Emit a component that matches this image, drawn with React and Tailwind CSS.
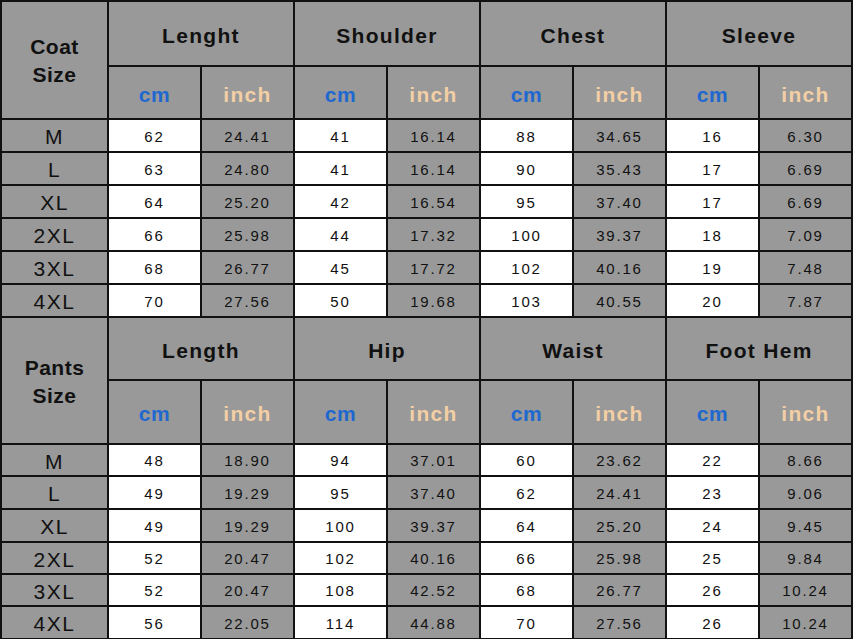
import React from 'react';

const coatRows = [
  ['M', '62', '24.41', '41', '16.14', '88', '34.65', '16', '6.30'],
  ['L', '63', '24.80', '41', '16.14', '90', '35.43', '17', '6.69'],
  ['XL', '64', '25.20', '42', '16.54', '95', '37.40', '17', '6.69'],
  ['2XL', '66', '25.98', '44', '17.32', '100', '39.37', '18', '7.09'],
  ['3XL', '68', '26.77', '45', '17.72', '102', '40.16', '19', '7.48'],
  ['4XL', '70', '27.56', '50', '19.68', '103', '40.55', '20', '7.87'],
];

const pantsRows = [
  ['M', '48', '18.90', '94', '37.01', '60', '23.62', '22', '8.66'],
  ['L', '49', '19.29', '95', '37.40', '62', '24.41', '23', '9.06'],
  ['XL', '49', '19.29', '100', '39.37', '64', '25.20', '24', '9.45'],
  ['2XL', '52', '20.47', '102', '40.16', '66', '25.98', '25', '9.84'],
  ['3XL', '52', '20.47', '108', '42.52', '68', '26.77', '26', '10.24'],
  ['4XL', '56', '22.05', '114', '44.88', '70', '27.56', '26', '10.24'],
];

const gray = 'bg-[#999999]';

function Section({ title, heads, rows }) {
  return (
    <>
      <div className={`${gray} row-span-2 flex items-center justify-center pt-[2px] text-center text-[21px] font-bold leading-[28px] tracking-[0.5px] text-[#111]`}>
        <div>
          {title}
          <br />
          Size
        </div>
      </div>
      {heads.map((h) => (
        <div key={h} className={`${gray} col-span-2 flex items-center justify-center pt-1 text-[21px] font-bold tracking-[1.3px] text-[#111]`}>
          {h}
        </div>
      ))}
      {heads.map((h) => (
        <React.Fragment key={h + '-u'}>
          <div className={`${gray} flex items-center justify-center pt-1 text-[21px] font-bold tracking-[0.5px] text-[#1f68cf]`}>cm</div>
          <div className={`${gray} flex items-center justify-center pt-1 text-[21px] font-bold tracking-[1.3px] text-[#f3cfa6]`}>inch</div>
        </React.Fragment>
      ))}
      {rows.map((r) => (
        <React.Fragment key={title + r[0]}>
          <div className={`${gray} flex items-center justify-center pt-[3px] text-[21px] tracking-[1.5px] text-[#111]`}>{r[0]}</div>
          {r.slice(1).map((v, i) => (
            <div
              key={i}
              className={`${i % 2 === 0 ? 'bg-white' : gray} flex items-center justify-center pt-[3px] text-[15px] tracking-[1.8px] text-[#111]`}
            >
              {v}
            </div>
          ))}
        </React.Fragment>
      ))}
    </>
  );
}

export default function App() {
  return (
    <div className="h-[639px] w-[853px] overflow-hidden bg-white" style={{ fontFamily: '"Liberation Sans", Arial, sans-serif' }}>
      <div className="grid w-[853px] grid-cols-[105px_repeat(8,91px)] grid-rows-[63px_51px_repeat(6,31px)_61px_62px_30px_31px_31px_30px_30px_31px] gap-[2px] bg-[#111] p-[2px]">
        <Section title="Coat" heads={['Lenght', 'Shoulder', 'Chest', 'Sleeve']} rows={coatRows} />
        <Section title="Pants" heads={['Length', 'Hip', 'Waist', 'Foot Hem']} rows={pantsRows} />
      </div>
    </div>
  );
}
